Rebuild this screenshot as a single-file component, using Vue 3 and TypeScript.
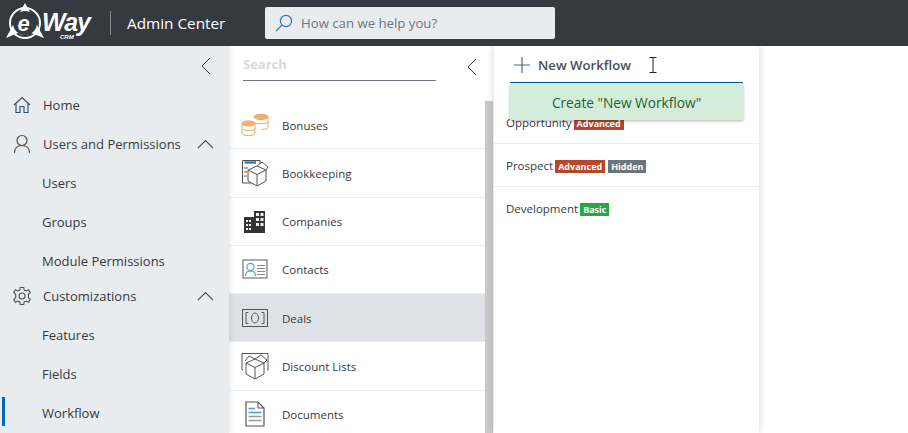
<template>
  <div class="page">
    <header class="topbar">
      <svg class="logo" width="96" height="46" viewBox="0 0 96 46">
        <path d="M25 3 L44 38 L31 33 A13 13 0 0 1 18 33 L6 38 Z" fill="#fff" />
        <circle cx="25" cy="23" r="12" fill="#343a40" />
        <circle cx="25" cy="23" r="15" fill="none" stroke="#fff" stroke-width="2" />
        <text x="17.5" y="31" class="logo-e">e</text>
        <text x="42" y="31" class="logo-way">Way</text>
        <text x="60" y="39" class="logo-crm">CRM</text>
      </svg>
      <span class="divider"></span>
      <span class="app-name">Admin Center</span>
      <div class="help">
        <svg width="18" height="18" viewBox="0 0 18 18" fill="none" stroke="#3a77c4" stroke-width="1.2">
          <circle cx="11" cy="7" r="5.6" />
          <path d="M7 11 L1 17" />
        </svg>
        <span>How can we help you?</span>
      </div>
    </header>

    <div class="body">
      <aside class="sidebar">
        <div class="collapse-row">
          <svg class="chevron" width="10" height="18" viewBox="0 0 10 18" fill="none" stroke="#343a40"><path d="M9 1 L1 9 L9 17" /></svg>
        </div>
        <nav class="nav">
          <div
            v-for="item in navItems"
            :key="item.label"
            class="nav-item"
            :class="{ sub: !item.icon, tight: item.tight, active: item.active }"
          >
            <svg v-if="item.icon === 'home'" class="nav-icon" width="20" height="20" viewBox="0 0 20 20" fill="none" stroke="#2f4a68" stroke-width="1.1">
              <path d="M2 10 L10 2.5 L18 10" />
              <path d="M4 8.5 V17.5 H8 V11.5 H12 V17.5 H16 V8.5" />
            </svg>
            <svg v-if="item.icon === 'user'" class="nav-icon" width="20" height="20" viewBox="0 0 20 20" fill="none" stroke="#5b5148" stroke-width="1.2">
              <circle cx="10" cy="6.5" r="5" />
              <path d="M2.5 19 C2.5 14 5.5 11.5 10 11.5 C14.5 11.5 17.5 14 17.5 19" />
            </svg>
            <svg v-if="item.icon === 'gear'" class="nav-icon" width="20" height="20" viewBox="0 0 20 20" fill="none" stroke="#4a4f55" stroke-width="1.1">
              <circle cx="10" cy="10" r="3" />
              <path d="M8.3 1.5 H11.7 L12.2 4 L14.3 5 L16.5 3.8 L18.3 6.7 L16.3 8.3 V11.7 L18.3 13.3 L16.5 16.2 L14.3 15 L12.2 16 L11.7 18.5 H8.3 L7.8 16 L5.7 15 L3.5 16.2 L1.7 13.3 L3.7 11.7 V8.3 L1.7 6.7 L3.5 3.8 L5.7 5 L7.8 4 Z" />
            </svg>
            <span class="nav-label">{{ item.label }}</span>
            <svg v-if="item.open" class="caret" width="17" height="10" viewBox="0 0 17 10" fill="none" stroke="#495057" stroke-width="1.1"><path d="M1 9 L8.5 1.5 L16 9" /></svg>
          </div>
        </nav>
      </aside>

      <section class="modules">
        <div class="filter-row">
          <div class="filter">Search</div>
          <svg class="chevron" width="10" height="18" viewBox="0 0 10 18" fill="none" stroke="#343a40"><path d="M9 1 L1 9 L9 17" /></svg>
        </div>
        <div class="module-wrap">
          <div class="module-list">
            <div v-for="m in modules" :key="m.label" class="module" :class="{ selected: m.selected }">
              <div class="module-icon">
                <svg v-if="m.icon === 'bonus'" width="28" height="24" viewBox="0 0 28 24" fill="none" stroke="#f2a765" stroke-width="1">
                  <path d="M13 4 C13 1 27 1 27 4 V14 C27 16 23 16.5 21 16.5" />
                  <ellipse cx="20" cy="4" rx="7" ry="2.6" fill="#f2b06f" />
                  <path d="M13 9.5 C15 11 25 11 27 9.5" />
                  <path d="M1 11 V20 C1 23.5 14 23.5 14 20 V11" fill="#fff" />
                  <ellipse cx="7.5" cy="10.5" rx="6.5" ry="2.6" fill="#f2b06f" />
                  <path d="M1 16 C3 18 12 18 14 16" />
                </svg>
                <svg v-if="m.icon === 'book'" width="28" height="28" viewBox="0 0 28 28" fill="none" stroke="#555" stroke-width="1">
                  <path d="M10 24 H1.5 V1.5 H19 V5" />
                  <path d="M3.5 3.5 H15" stroke="#2b7bb9" stroke-width="2.4" />
                  <path d="M3 9 H7 M3 13 H6 M3 17 H6" stroke="#aaa" stroke-width="2" />
                  <path d="M7 11 L16 7 L25 11 V22 L16 27 L7 22 Z" fill="#fff" />
                  <path d="M7 11 L16 15.5 L25 11 M16 15.5 V27 M16 7 L21 3 L27 8 L25 11" />
                </svg>
                <svg v-if="m.icon === 'company'" width="22" height="24" viewBox="0 0 22 24">
                  <path d="M0 8 H10 V2 H21 V24 H0 Z" fill="#343434" />
                  <g fill="#eee">
                    <rect x="12" y="4" width="3" height="3" /><rect x="16.5" y="4" width="3" height="3" />
                    <rect x="12" y="9" width="3" height="3" /><rect x="16.5" y="9" width="3" height="3" />
                    <rect x="12" y="14" width="3" height="3" /><rect x="16.5" y="14" width="3" height="3" />
                    <rect x="2" y="11" width="2" height="2" /><rect x="5" y="11" width="2" height="2" />
                    <rect x="2" y="15" width="2" height="2" /><rect x="5" y="15" width="2" height="2" />
                    <rect x="2" y="19" width="2" height="2" /><rect x="5" y="19" width="2" height="2" />
                  </g>
                </svg>
                <svg v-if="m.icon === 'contact'" width="26" height="20" viewBox="0 0 26 20" fill="none">
                  <rect x="1" y="1" width="24" height="18" stroke="#888" stroke-width="1.4" />
                  <circle cx="8.5" cy="8" r="3.6" stroke="#4a9fd8" stroke-width="1.1" />
                  <path d="M3.5 17 C3.5 13.5 5.5 12 8.5 12 C11.5 12 13.5 13.5 13.5 17" stroke="#4a9fd8" stroke-width="1.1" />
                  <path d="M15 6.5 H23 M15 9.5 H23 M15 12.5 H23 M15 15.5 H23" stroke="#888" stroke-width="1.1" />
                </svg>
                <svg v-if="m.icon === 'deal'" width="26" height="18" viewBox="0 0 26 18" fill="none" stroke="#555" stroke-width="1">
                  <rect x="0.5" y="0.5" width="25" height="17" />
                  <path d="M6.5 3.5 H4 V14.5 H6.5 M19.5 3.5 H22 V14.5 H19.5" />
                  <ellipse cx="13" cy="9" rx="3.5" ry="5" />
                </svg>
                <svg v-if="m.icon === 'discount'" width="28" height="28" viewBox="0 0 28 28" fill="none" stroke="#555" stroke-width="1">
                  <path d="M2 18 H1 V1.5 H27 V18 H26" />
                  <path d="M5 18 V11 L14 7 L23 11 V22 L14 27 L5 22 Z" fill="#fff" />
                  <path d="M5 11 L14 15.5 L23 11 M14 15.5 V27 M14 7 L8 4 L4 9 M14 7 L20 3 L26 8 L23 11" />
                </svg>
                <svg v-if="m.icon === 'doc'" width="20" height="26" viewBox="0 0 20 26" fill="none">
                  <path d="M1 1 H13 L19 7 V25 H1 Z" stroke="#555" stroke-width="1.2" />
                  <path d="M13 1 V7 H19" stroke="#555" />
                  <path d="M3.5 7.5 H10" stroke="#4a9fd8" stroke-width="1.6" />
                  <path d="M3.5 11.5 H16.5" stroke="#4a9fd8" stroke-width="1.6" />
                  <path d="M3.5 15.5 H16.5 M3.5 19.5 H16.5" stroke="#999" stroke-width="1.6" />
                </svg>
              </div>
              <span>{{ m.label }}</span>
            </div>
          </div>
          <div class="scrollbar"></div>
        </div>
      </section>

      <section class="workflows">
        <div class="new-row">
          <svg width="16" height="16" viewBox="0 0 16 16" stroke="#4a6a8a" stroke-width="1.2"><path d="M8 0 V16 M0 8 H16" /></svg>
          <span class="new-name">New Workflow</span>
          <svg class="ibeam" width="8" height="16" viewBox="0 0 8 16" fill="none" stroke="#222"><path d="M0.5 0.5 H7.5 M4 0.5 V15.5 M0.5 15.5 H7.5" /></svg>
        </div>
        <div class="create-menu">Create "New Workflow"</div>
        <div class="wf-list">
          <div v-for="w in workflows" :key="w.label" class="wf">
            <span>{{ w.label }}</span>
            <span v-for="b in w.badges" :key="b" class="badge" :class="b.toLowerCase()">{{ b }}</span>
          </div>
        </div>
      </section>
    </div>
  </div>
</template>

<script setup lang="ts">
interface NavItem {
  label: string
  icon?: string
  open?: boolean
  tight?: boolean
  active?: boolean
}

const navItems: NavItem[] = [
  { label: 'Home', icon: 'home' },
  { label: 'Users and Permissions', icon: 'user', open: true },
  { label: 'Users' },
  { label: 'Groups' },
  { label: 'Module Permissions' },
  { label: 'Customizations', icon: 'gear', open: true, tight: true },
  { label: 'Features' },
  { label: 'Fields' },
  { label: 'Workflow', active: true },
]

const modules = [
  { label: 'Bonuses', icon: 'bonus' },
  { label: 'Bookkeeping', icon: 'book' },
  { label: 'Companies', icon: 'company' },
  { label: 'Contacts', icon: 'contact' },
  { label: 'Deals', icon: 'deal', selected: true },
  { label: 'Discount Lists', icon: 'discount' },
  { label: 'Documents', icon: 'doc' },
]

const workflows = [
  { label: 'Opportunity', badges: ['Advanced'] },
  { label: 'Prospect', badges: ['Advanced', 'Hidden'] },
  { label: 'Development', badges: ['Basic'] },
]
</script>

<style>
html,
body {
  margin: 0;
  overflow: hidden;
  background: #fff;
}
</style>

<style scoped>
.page {
  width: 908px;
  height: 433px;
  overflow: hidden;
  font-family: "Open Sans", "Liberation Sans", sans-serif;
  color: #343a40;
}

.topbar {
  position: relative;
  z-index: 3;
  height: 46px;
  background: #343a40;
  display: flex;
  align-items: center;
}

.logo {
  flex: none;
}

.logo-e {
  font: italic 700 22px "Liberation Sans", sans-serif;
  fill: #fff;
}

.logo-way {
  font: italic 700 25px "Liberation Sans", sans-serif;
  fill: #fff;
  letter-spacing: -1px;
}

.logo-crm {
  font: italic 700 6px "Liberation Sans", sans-serif;
  fill: #fff;
}

.divider {
  width: 1px;
  height: 24px;
  background: #868b90;
  margin-left: 14px;
}

.app-name {
  margin-left: 16px;
  width: 138px;
  font-size: 15.3px;
  color: #fff;
}

.help {
  width: 290px;
  height: 32px;
  background: #e9ecef;
  border-radius: 2px;
  display: flex;
  align-items: center;
  gap: 8px;
  padding-left: 10px;
  box-sizing: border-box;
  font-size: 13.2px;
  color: #6c757d;
}

.body {
  display: flex;
  height: 387px;
}

.sidebar {
  position: relative;
  z-index: 1;
  width: 229px;
  flex: none;
  background: #e9ecef;
  box-shadow: 1px 0 5px rgba(0, 0, 0, 0.1);
}

.collapse-row {
  height: 39px;
  display: flex;
  align-items: center;
  justify-content: flex-end;
  padding-right: 18px;
}

.nav-item {
  position: relative;
  height: 39px;
  display: flex;
  align-items: center;
  padding-left: 43px;
  font-size: 13px;
}

.nav-item.sub {
  padding-left: 42px;
}

.nav-item.tight {
  margin-top: -4px;
}

.nav-item.active::before {
  content: "";
  position: absolute;
  left: 2px;
  top: 4px;
  width: 3px;
  height: 29px;
  background: #0067b8;
}

.nav-icon {
  position: absolute;
  left: 12px;
  top: 10px;
}

.nav-label {
  flex: 1;
}

.caret {
  margin-right: 15px;
}

.modules {
  width: 265px;
  flex: none;
  background: #fff;
  display: flex;
  flex-direction: column;
}

.filter-row {
  height: 55px;
  flex: none;
  display: flex;
  padding: 0 17px 0 14px;
  justify-content: space-between;
  align-items: flex-start;
}

.filter {
  width: 193px;
  height: 35px;
  box-sizing: border-box;
  border-bottom: 1px solid #6c757d;
  font-size: 13px;
  font-weight: 700;
  line-height: 36px;
  color: #d5d9dd;
}

.filter-row .chevron {
  margin-top: 12px;
}

.module-wrap {
  flex: 1;
  position: relative;
  min-height: 0;
  overflow: hidden;
}

.module-list {
  width: 256px;
}

.module {
  height: 48.25px;
  box-sizing: border-box;
  display: flex;
  align-items: center;
  padding: 1px 0 0 53px;
  position: relative;
  border-bottom: 1px solid #eceeef;
  font-size: 11.5px;
}

.module.selected {
  background: #dee2e6;
}

.module-icon {
  position: absolute;
  left: 12px;
  top: 0;
  width: 28px;
  height: 100%;
  display: flex;
  align-items: center;
  justify-content: center;
}

.scrollbar {
  position: absolute;
  right: 1px;
  top: 0;
  bottom: 0;
  width: 8px;
  background: #c8c8c8;
}

.workflows {
  position: relative;
  z-index: 1;
  width: 265px;
  flex: none;
  background: #fff;
  box-shadow: 0 0 7px rgba(0, 0, 0, 0.18);
}

.new-row {
  height: 35px;
  margin: 0 16px 18px;
  padding: 1px 0 0 4px;
  display: flex;
  align-items: center;
  border-bottom: 1px solid #005a9e;
  font-size: 13.2px;
  font-weight: 600;
  color: #495057;
}

.new-name {
  margin-left: 8px;
}

.ibeam {
  margin-left: 18px;
}

.create-menu {
  position: absolute;
  left: 16px;
  top: 37px;
  width: 233px;
  height: 37px;
  background: #d4edda;
  box-shadow: 0 1px 3px rgba(0, 0, 0, 0.3);
  text-align: center;
  line-height: 40px;
  font-size: 13.7px;
  color: #1f5f3a;
}

.wf {
  height: 43px;
  box-sizing: border-box;
  padding-left: 12px;
  padding-top: 14px;
  border-bottom: 1px solid #eceeef;
  font-size: 11.5px;
  display: flex;
  align-items: flex-start;
  line-height: 16px;
}

.wf:last-child {
  border-bottom: 0;
}

.badge {
  height: 13px;
  line-height: 13px;
  margin-left: 2px;
  padding: 0 3px;
  margin-top: 2px;
  font-size: 9px;
  font-weight: 700;
  color: #fff;
}

.badge + .badge {
  margin-left: 3px;
}

.advanced {
  background: #b7472a;
}

.hidden {
  background: #6c757d;
}

.basic {
  background: #28a745;
}
</style>
